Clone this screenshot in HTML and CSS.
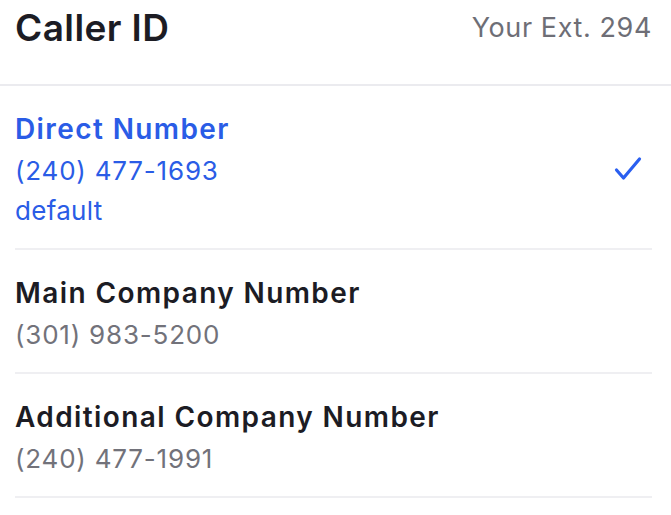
FILE: index.html
```html
<!DOCTYPE html>
<html>
<head>
<meta charset="utf-8">
<link rel="stylesheet" href="styles.css">
</head>
<body>
<div class="screen">
  <header class="header">
    <h1 class="title">Caller ID</h1>
    <span class="ext">Your Ext. 294</span>
  </header>
  <ul class="list">
    <li class="row selected">
      <div class="info">
        <div class="name">Direct Number</div>
        <div class="number">(240) 477-1693</div>
        <div class="number tag">default</div>
      </div>
      <svg class="check" width="30" height="26" viewBox="0 0 30 26"><path d="M3.5 14 L10.5 22 L26.5 3" fill="none" stroke="#2a5ff0" stroke-width="3.2" stroke-linecap="round" stroke-linejoin="round"/></svg>
    </li>
    <li class="row">
      <div class="info">
        <div class="name">Main Company Number</div>
        <div class="number">(301) 983-5200</div>
      </div>
    </li>
    <li class="row">
      <div class="info">
        <div class="name">Additional Company Number</div>
        <div class="number">(240) 477-1991</div>
      </div>
    </li>
  </ul>
</div>
</body>
</html>
```

FILE: styles.css
```css
* { box-sizing: border-box; }
html, body { margin: 0; padding: 0; background: #fff; }
body { font-family: Inter, "Noto Sans", sans-serif; color: #1c1c24; }
.screen { width: 671px; height: 515px; overflow: hidden; }
.header {
  height: 86px;
  display: flex;
  justify-content: space-between;
  align-items: flex-start;
  padding: 6px 19px 0 15px;
  border-bottom: 2px solid #ebebef;
}
.title { margin: 0; font-size: 37px; font-weight: 600; letter-spacing: 0.4px; line-height: 44px; }
.ext { font-size: 27px; color: #6e6e76; line-height: 40px; padding-top: 2px; letter-spacing: 0.6px; }
.list { list-style: none; margin: 0; padding: 0 19px 0 15px; }
.row {
  display: flex;
  align-items: center;
  justify-content: space-between;
  padding: 21px 0 17px;
  border-bottom: 2px solid #efeff2;
}
.name { font-size: 28px; font-weight: 600; line-height: 44px; letter-spacing: 1.4px; }
.number { font-size: 26px; line-height: 40px; color: #72727a; letter-spacing: 0.8px; }
.tag { letter-spacing: 0.3px; }
.selected .name, .selected .number { color: #2a5ce6; }
.check { margin-right: 9px; }
```
